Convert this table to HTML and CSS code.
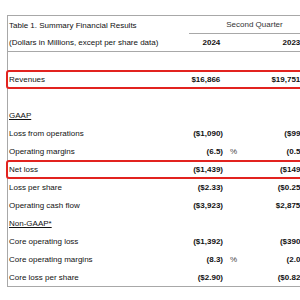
FILE: index.html
```html
<!DOCTYPE html>
<html>
<head>
<meta charset="utf-8">
<link rel="stylesheet" href="styles.css">
</head>
<body>
<div class="sheet">
  <div class="row">
    <div class="label">Table 1. Summary Financial Results</div>
    <div class="period">Second Quarter</div>
  </div>
  <div class="row rule">
    <div class="label">(Dollars in Millions, except per share data)</div>
    <div class="num pos">2024</div><div class="pct"></div>
    <div class="num2 pos">2023</div><div class="pct"></div>
  </div>
  <div class="row"></div>
  <div class="row boxed">
    <div class="label">Revenues</div>
    <div class="num pos">$16,866</div><div class="pct"></div>
    <div class="num2 pos">$19,751</div><div class="pct"></div>
  </div>
  <div class="row"></div>
  <div class="row">
    <div class="label"><span class="ul">GAAP</span></div>
  </div>
  <div class="row">
    <div class="label">Loss from operations</div>
    <div class="num">($1,090)</div><div class="pct"></div>
    <div class="num2">($99)</div><div class="pct"></div>
  </div>
  <div class="row">
    <div class="label">Operating margins</div>
    <div class="num">(6.5)</div><div class="pct">%</div>
    <div class="num2">(0.5)</div><div class="pct">%</div>
  </div>
  <div class="row boxed">
    <div class="label">Net loss</div>
    <div class="num">($1,439)</div><div class="pct"></div>
    <div class="num2">($149)</div><div class="pct"></div>
  </div>
  <div class="row">
    <div class="label">Loss per share</div>
    <div class="num">($2.33)</div><div class="pct"></div>
    <div class="num2">($0.25)</div><div class="pct"></div>
  </div>
  <div class="row">
    <div class="label">Operating cash flow</div>
    <div class="num">($3,923)</div><div class="pct"></div>
    <div class="num2 pos">$2,875</div><div class="pct"></div>
  </div>
  <div class="row">
    <div class="label"><span class="ul">Non-GAAP*</span></div>
  </div>
  <div class="row">
    <div class="label">Core operating loss</div>
    <div class="num">($1,392)</div><div class="pct"></div>
    <div class="num2">($390)</div><div class="pct"></div>
  </div>
  <div class="row">
    <div class="label">Core operating margins</div>
    <div class="num">(8.3)</div><div class="pct">%</div>
    <div class="num2">(2.0)</div><div class="pct">%</div>
  </div>
  <div class="row">
    <div class="label">Core loss per share</div>
    <div class="num">($2.90)</div><div class="pct"></div>
    <div class="num2">($0.82)</div><div class="pct"></div>
  </div>
</div>
</body>
</html>
```

FILE: styles.css
```css
html, body {
  margin: 0;
  padding: 0;
  background: #fff;
  overflow: hidden;
}
body {
  width: 300px;
  height: 300px;
  font-family: "Liberation Sans", Arial, sans-serif;
  font-size: 8px;
  color: #111;
}
.sheet {
  margin: 15px 0 0 7px;
  width: 360px;
  border-top: 1px solid #a8a8a8;
  border-left: 1px solid #a8a8a8;
  border-bottom: 1px solid #a8a8a8;
}
.row {
  position: relative;
  display: flex;
  align-items: center;
  height: 18px;
  box-sizing: border-box;
}
.row.rule {
  border-bottom: 1px solid #a8a8a8;
}
.label {
  width: 181px;
  flex: none;
  padding-left: 1px;
  box-sizing: border-box;
  white-space: nowrap;
}
.period {
  width: 131px;
  flex: none;
  height: 18px;
  line-height: 17px;
  box-sizing: border-box;
  border-bottom: 1px solid #a8a8a8;
  text-align: center;
  color: #333;
}
.num, .num2 {
  flex: none;
  text-align: right;
  font-weight: bold;
  white-space: nowrap;
}
.num { width: 34px; }
.num2 { width: 53px; }
.pos { padding-right: 2.7px; box-sizing: border-box; }
.pct {
  width: 27px;
  flex: none;
  padding-left: 7px;
  box-sizing: border-box;
  color: #444;
}
.ul {
  text-decoration: underline;
}
.boxed::after {
  content: "";
  position: absolute;
  left: -2px;
  right: -4px;
  top: 0;
  bottom: -1px;
  border: 2px solid #e2231f;
  border-radius: 3px;
}
```
